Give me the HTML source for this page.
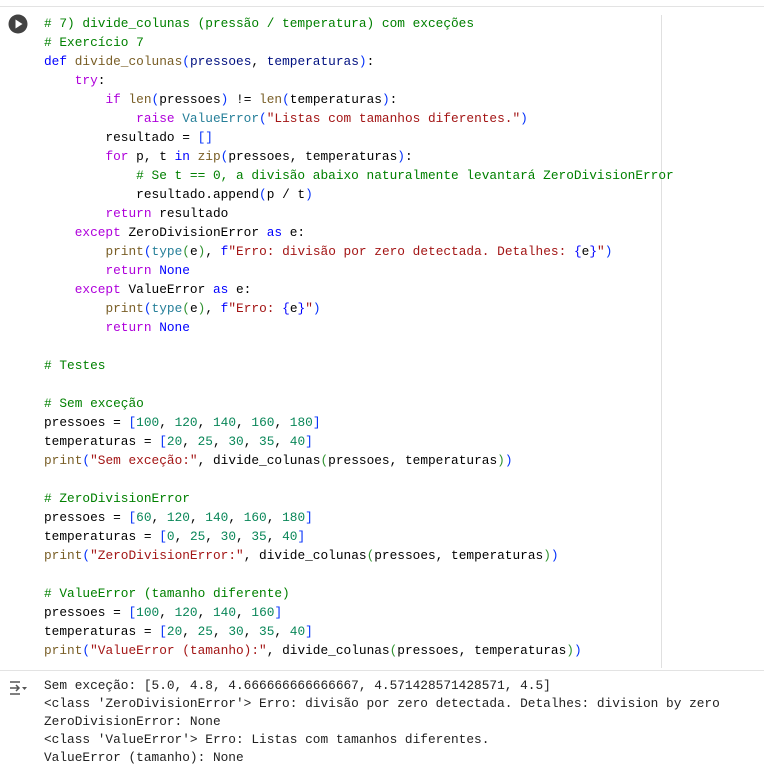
<!DOCTYPE html>
<html><head><meta charset="utf-8"><style>
html,body{margin:0;padding:0;background:#fff;width:764px;height:769px;overflow:hidden}
.card{position:absolute;left:0;top:6px;width:764px;height:764px;border-top:1px solid #e3e3e3}
.vl{position:absolute;left:661px;top:15px;width:1px;height:653px;background:#e0e0e0}
.div{position:absolute;left:0;top:670px;width:764px;height:1px;background:#e3e3e3}
pre{margin:0;font-family:"Liberation Mono",monospace;font-size:12.8px;position:absolute;left:44px;white-space:pre}
.code{top:14px;line-height:19px;color:#000}
.out{top:677px;line-height:18px;color:#212121}
.c{color:#008000}.k{color:#0000ff}.p{color:#af00db}.f{color:#795e26}.v{color:#001080}.s{color:#a31515}.n{color:#098658}.t{color:#267f99}.b1{color:#0431fa}.b2{color:#319331}
</style></head><body>
<div class="card"></div>
<div class="vl"></div>
<div class="div"></div>
<svg style="position:absolute;left:8px;top:14px" width="20" height="20"><circle cx="10" cy="10" r="9.5" fill="#424242"/><path d="M7.5 5.5 L14.5 10 L7.5 14.5Z" fill="#fff"/></svg>
<svg style="position:absolute;left:9px;top:680px" width="18" height="16" fill="none" stroke="#555" stroke-width="1.5"><path d="M1 2h10M1 8h9M7 5l3 3-3 3M1 14h10"/><path d="M13 7l2.5 3 2.5-3z" fill="#555" stroke="none"/></svg>
<pre class="code"><span class="c"># 7) divide_colunas (pressão / temperatura) com exceções</span>
<span class="c"># Exercício 7</span>
<span class="k">def</span> <span class="f">divide_colunas</span><span class="b1">(</span><span class="v">pressoes</span>, <span class="v">temperaturas</span><span class="b1">)</span>:
    <span class="p">try</span>:
        <span class="p">if</span> <span class="f">len</span><span class="b1">(</span>pressoes<span class="b1">)</span> != <span class="f">len</span><span class="b1">(</span>temperaturas<span class="b1">)</span>:
            <span class="p">raise</span> <span class="t">ValueError</span><span class="b1">(</span><span class="s">"Listas com tamanhos diferentes."</span><span class="b1">)</span>
        resultado = <span class="b1">[]</span>
        <span class="p">for</span> p, t <span class="k">in</span> <span class="f">zip</span><span class="b1">(</span>pressoes, temperaturas<span class="b1">)</span>:
            <span class="c"># Se t == 0, a divisão abaixo naturalmente levantará ZeroDivisionError</span>
            resultado.append<span class="b1">(</span>p / t<span class="b1">)</span>
        <span class="p">return</span> resultado
    <span class="p">except</span> ZeroDivisionError <span class="k">as</span> e:
        <span class="f">print</span><span class="b1">(</span><span class="t">type</span><span class="b2">(</span>e<span class="b2">)</span>, <span class="k">f</span><span class="s">"Erro: divisão por zero detectada. Detalhes: </span><span class="k">{</span>e<span class="k">}</span><span class="s">"</span><span class="b1">)</span>
        <span class="p">return</span> <span class="k">None</span>
    <span class="p">except</span> ValueError <span class="k">as</span> e:
        <span class="f">print</span><span class="b1">(</span><span class="t">type</span><span class="b2">(</span>e<span class="b2">)</span>, <span class="k">f</span><span class="s">"Erro: </span><span class="k">{</span>e<span class="k">}</span><span class="s">"</span><span class="b1">)</span>
        <span class="p">return</span> <span class="k">None</span>

<span class="c"># Testes</span>

<span class="c"># Sem exceção</span>
pressoes = <span class="b1">[</span><span class="n">100</span>, <span class="n">120</span>, <span class="n">140</span>, <span class="n">160</span>, <span class="n">180</span><span class="b1">]</span>
temperaturas = <span class="b1">[</span><span class="n">20</span>, <span class="n">25</span>, <span class="n">30</span>, <span class="n">35</span>, <span class="n">40</span><span class="b1">]</span>
<span class="f">print</span><span class="b1">(</span><span class="s">"Sem exceção:"</span>, divide_colunas<span class="b2">(</span>pressoes, temperaturas<span class="b2">)</span><span class="b1">)</span>

<span class="c"># ZeroDivisionError</span>
pressoes = <span class="b1">[</span><span class="n">60</span>, <span class="n">120</span>, <span class="n">140</span>, <span class="n">160</span>, <span class="n">180</span><span class="b1">]</span>
temperaturas = <span class="b1">[</span><span class="n">0</span>, <span class="n">25</span>, <span class="n">30</span>, <span class="n">35</span>, <span class="n">40</span><span class="b1">]</span>
<span class="f">print</span><span class="b1">(</span><span class="s">"ZeroDivisionError:"</span>, divide_colunas<span class="b2">(</span>pressoes, temperaturas<span class="b2">)</span><span class="b1">)</span>

<span class="c"># ValueError (tamanho diferente)</span>
pressoes = <span class="b1">[</span><span class="n">100</span>, <span class="n">120</span>, <span class="n">140</span>, <span class="n">160</span><span class="b1">]</span>
temperaturas = <span class="b1">[</span><span class="n">20</span>, <span class="n">25</span>, <span class="n">30</span>, <span class="n">35</span>, <span class="n">40</span><span class="b1">]</span>
<span class="f">print</span><span class="b1">(</span><span class="s">"ValueError (tamanho):"</span>, divide_colunas<span class="b2">(</span>pressoes, temperaturas<span class="b2">)</span><span class="b1">)</span></pre>
<pre class="out">Sem exceção: [5.0, 4.8, 4.666666666666667, 4.571428571428571, 4.5]
&lt;class 'ZeroDivisionError'&gt; Erro: divisão por zero detectada. Detalhes: division by zero
ZeroDivisionError: None
&lt;class 'ValueError'&gt; Erro: Listas com tamanhos diferentes.
ValueError (tamanho): None</pre>
</body></html>
